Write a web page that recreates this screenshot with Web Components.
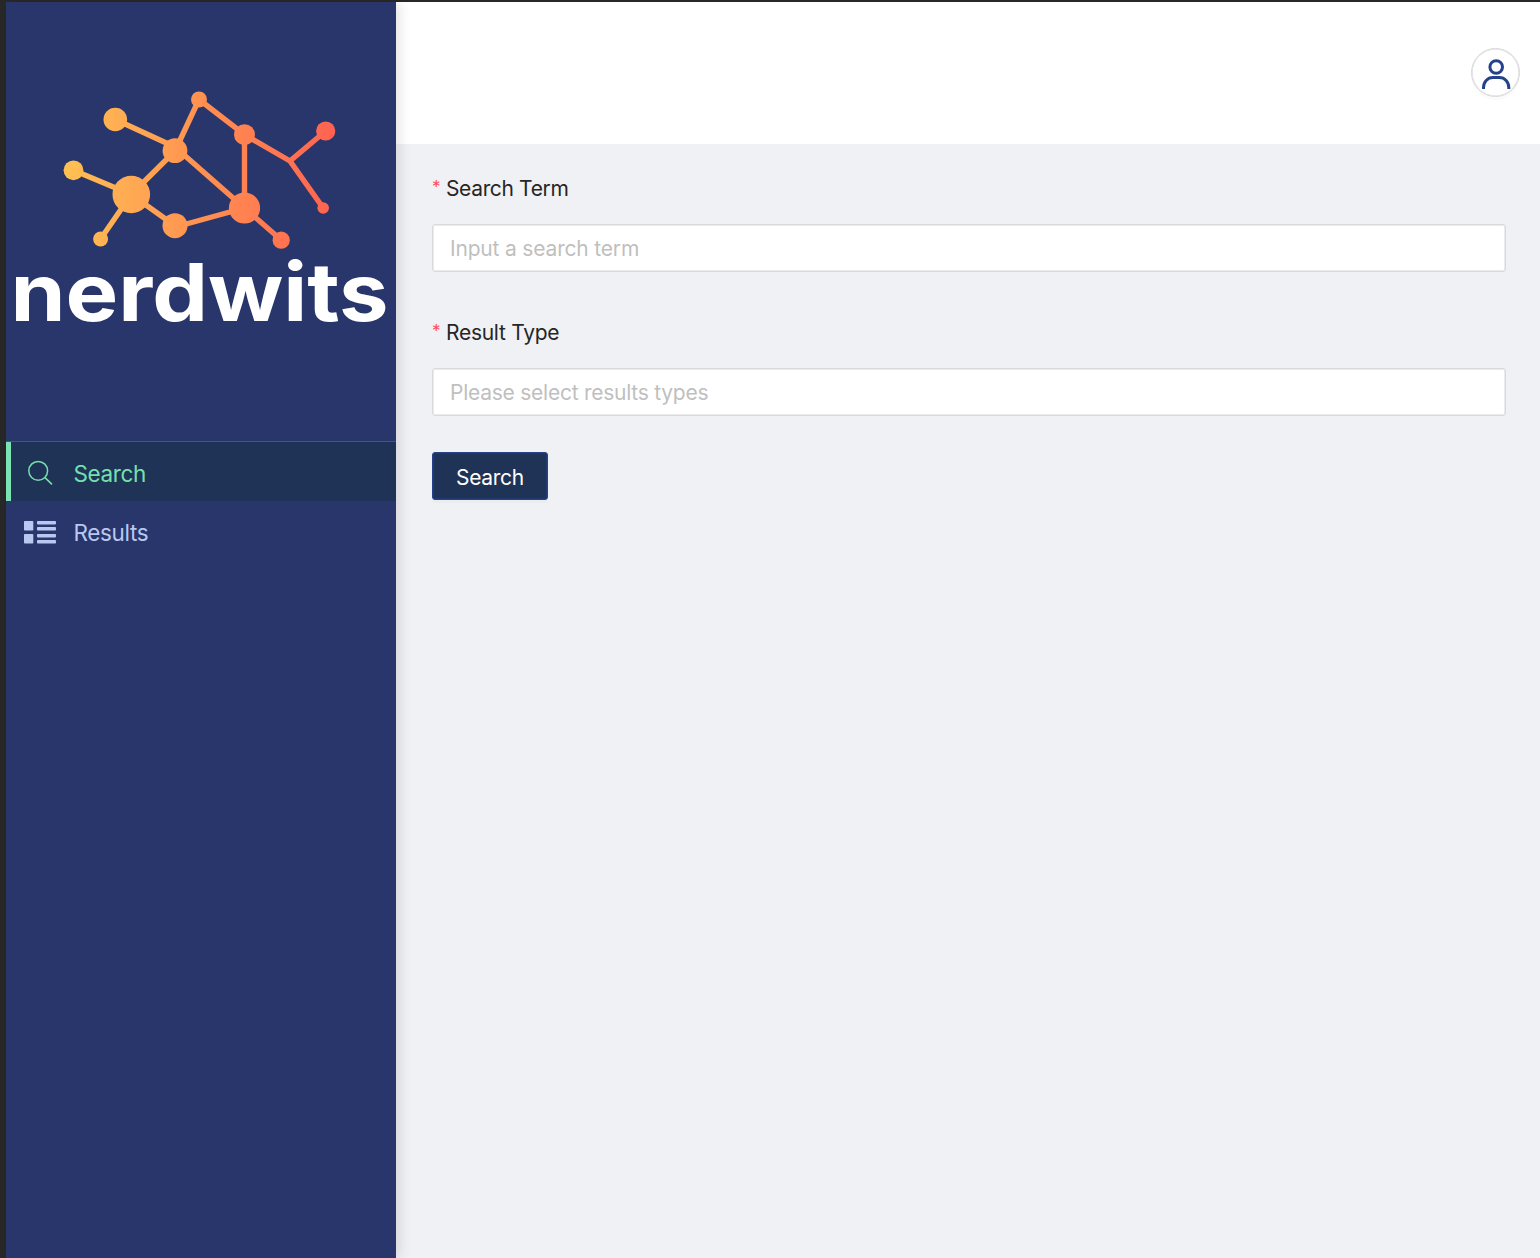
<!DOCTYPE html>
<html lang="en">
<head>
<meta charset="utf-8">
<title>nerdwits</title>
<style>
html,body{margin:0;height:100%}
body{overflow:hidden;background:#282828;font-family:Inter,"Liberation Sans",sans-serif}
</style>
</head>
<body>
<nw-app>
  <nw-sidebar slot="side">
    <nw-logo slot="brand"></nw-logo>
    <nw-item icon="search" active>Search</nw-item>
    <nw-item icon="list">Results</nw-item>
  </nw-sidebar>
  <nw-header slot="head"></nw-header>
  <nw-field style="--label-space:-.36px;--ph-space:-.18px" placeholder="Input a search term">Search Term</nw-field>
  <nw-field style="--label-space:-.27px;--ph-space:-.25px" placeholder="Please select results types">Result Type</nw-field>
  <nw-button>Search</nw-button>
</nw-app>
<script>
function define(name, render) {
  customElements.define(name, class extends HTMLElement {
    constructor() {
      super();
      this.attachShadow({ mode: 'open' });
    }
    connectedCallback() {
      this.shadowRoot.innerHTML = render(this);
    }
  });
}

define('nw-app', () => `
<style>
:host{display:flex;height:100vh;box-sizing:border-box;padding:2px 0 0 6px;background:#282828}
.col{flex:1;min-width:0;display:flex;flex-direction:column;background:#f0f1f5}
main{display:flex;flex-direction:column;align-items:stretch;padding:24.5px 34px 0 36px}
</style>
<slot name="side"></slot>
<div class="col"><slot name="head"></slot><main><slot></slot></main></div>`);

define('nw-sidebar', () => `
<style>
:host{display:block;position:relative;z-index:1;flex:none;width:390px;background:#29366c;box-shadow:3px 0 12px rgba(0,0,0,.12)}
nav{border-top:1px solid #3c5a80}
</style>
<slot name="brand"></slot><nav><slot></slot></nav>`);

define('nw-logo', () => `
<style>
:host{display:block;height:439px}
svg{display:block}
text{font:700 80px Inter,"Liberation Sans",sans-serif;fill:#fff}
</style>
<svg width="390" height="439" viewBox="6 2 390 439">
<defs><linearGradient id="g" gradientUnits="userSpaceOnUse" x1="64" y1="0" x2="336" y2="0"><stop stop-color="#ffc153"/><stop offset="1" stop-color="#ff6250"/></linearGradient></defs>
<path fill="none" stroke="url(#g)" stroke-width="5.4" stroke-linejoin="round" d="M115.3 119.5L175 147M73.5 170.3L131.3 194.5L100.6 239M131.3 194.5L175 151L199 99.5L244.5 134.7V208L175 147M131.3 194.5L175 225.7L179 226L244.5 208L281.2 240M244.5 134.7L290 161L325.7 131M290 161L323.2 208"/>
<g fill="url(#g)">
<circle cx="115.3" cy="119.5" r="11.8"/><circle cx="73.5" cy="170.3" r="9.9"/><circle cx="131.3" cy="194.5" r="18.8"/><circle cx="100.6" cy="239" r="7.5"/><circle cx="175" cy="150.7" r="12.4"/><circle cx="199" cy="99.5" r="8"/><circle cx="244.5" cy="134.7" r="10.5"/><circle cx="244.5" cy="208" r="15.6"/><circle cx="175" cy="225.7" r="12.5"/><circle cx="281.2" cy="240.2" r="8.6"/><circle cx="325.7" cy="131" r="9.6"/><circle cx="323.2" cy="208" r="5.8"/>
</g>
<text x="10.5" y="321" textLength="378" lengthAdjust="spacingAndGlyphs">nerdwits</text>
</svg>`);

const ICONS = {
  search: '<g fill="none" stroke="currentColor" stroke-width="1.5"><circle cx="16.2" cy="14.8" r="9.4"/><path d="M23 21.6L30 28.4"/></g>',
  list: '<g fill="currentColor"><rect x="2" y="6" width="9.3" height="9.6" rx=".8"/><rect x="2" y="19" width="9.3" height="9.6" rx=".8"/><rect x="15" y="6" width="19" height="3.4" rx=".8"/><rect x="15" y="12" width="19" height="3.6" rx=".8"/><rect x="15" y="19" width="19" height="3.4" rx=".8"/><rect x="15" y="25" width="19" height="3.6" rx=".8"/></g>'
};

define('nw-item', el => `
<style>
:host{display:flex;align-items:center;height:60px;box-sizing:border-box;padding:0 0 0 16px;color:#b9c8f0;font-size:22.5px;letter-spacing:-.35px}
:host([active]){height:59px;background:#1f3356;color:#75e0ae;border-left:5px solid #7be3b3;padding-left:11px}
svg{flex:none;margin-right:15.5px}
span{position:relative;top:1.5px}
</style>
<svg width="36" height="32" viewBox="0 0 36 32">${ICONS[el.getAttribute('icon')]}</svg><span><slot></slot></span>`);

define('nw-header', () => `
<style>
:host{display:flex;flex:none;justify-content:flex-end;align-items:center;height:142px;box-sizing:border-box;padding:0 20px 1px 0;background:#fff}
.avatar{width:49px;height:49px;box-sizing:border-box;border:1px solid #d9d9d9;border-radius:50%;box-shadow:inset 0 0 0 .6px #d9d9d9,0 3px 2px rgba(0,0,0,.02)}
svg{display:block;margin:-1px}
</style>
<div class="avatar"><svg width="49" height="49" viewBox="1471 48 49 49" fill="none" stroke="#24418c" stroke-width="3"><circle cx="1496.2" cy="67" r="6.3"/><path d="M1483.5 89V87.5C1483.5 82 1487.5 77.6 1493 77.6H1499.3C1504.8 77.6 1508.8 82 1508.8 87.5V89"/></svg></div>`);

define('nw-field', el => `
<style>
:host{display:block;height:144px}
label{display:flex;height:40px;align-items:center;font-size:21px;color:#262628;letter-spacing:var(--label-space)}
i{font:normal 17px Inter,sans-serif;color:#ff4d4f;width:14px;letter-spacing:0;padding-bottom:3px}
.box{display:flex;align-items:center;height:48px;box-sizing:border-box;margin-top:15.5px;padding:1px 17px 0;border:1px solid #d9d9d9;border-radius:3px;background:#fff;box-shadow:inset 0 0 0 1px #ebebeb;font-size:21px;color:#bfbfbf;letter-spacing:var(--ph-space)}
</style>
<label><i>*</i><slot></slot></label><div class="box">${el.getAttribute('placeholder')}</div>`);

define('nw-button', () => `
<style>
:host{display:flex;align-items:center;justify-content:center;align-self:flex-start;width:116px;height:48px;box-sizing:border-box;margin-top:-4.5px;padding-top:2px;border:1px solid #24418c;border-radius:3px;background:#1f3356;color:#fff;font-size:21px;letter-spacing:-.3px;box-shadow:inset 0 0 0 .6px #24418c,0 3px 0 rgba(0,0,0,.02)}
</style>
<slot></slot>`);
</script>
</body>
</html>
